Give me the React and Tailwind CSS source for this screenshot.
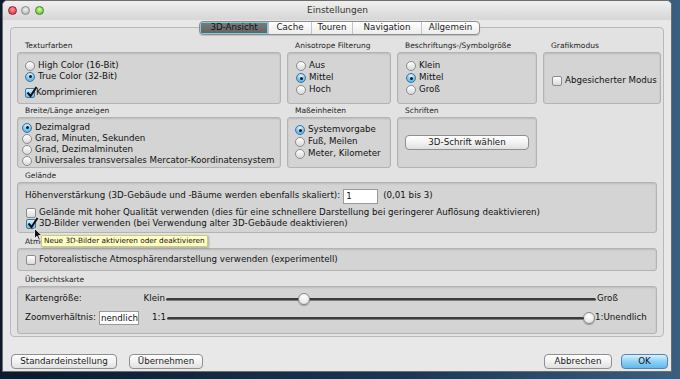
import React from "react";

const Radio = ({ on }) => (
  <span
    className={`w-[10px] h-[10px] rounded-full border flex items-center justify-center shrink-0 ${
      on
        ? "border-[#3b76a6] bg-[radial-gradient(circle_at_50%_25%,#e3f6ff,#63b9e9_70%)]"
        : "border-[#8c8c8c] bg-[linear-gradient(#ffffff,#d9d9d9)]"
    }`}
  >
    {on && <span className="w-[3px] h-[3px] rounded-full bg-[#151515]" />}
  </span>
);

const Check = ({ on }) => (
  <span
    className={`relative w-[10px] h-[10px] rounded-[2px] border shrink-0 ${
      on
        ? "border-[#3b76a6] bg-[linear-gradient(#d6f0ff,#6dbde9)]"
        : "border-[#8c8c8c] bg-[linear-gradient(#ffffff,#dadada)]"
    }`}
  >
    {on && (
      <svg className="absolute -top-[3px] left-0" width="12" height="12" viewBox="0 0 12 12">
        <path d="M1.5 6.5 L4.5 10 L10.5 1" stroke="#111" strokeWidth="2" fill="none" />
      </svg>
    )}
  </span>
);

const Opt = ({ children, h = "h-[11px]" }) => (
  <div className={`flex items-center gap-[3px] whitespace-nowrap ${h}`}>{children}</div>
);

const Group = ({ title, className, children }) => (
  <div className="flex flex-col">
    <div className="h-[12px] pl-[8px] text-[7.5px] leading-[12px] text-[#222] whitespace-nowrap">{title}</div>
    <div
      className={`rounded-[3px] border border-[#b3b3b3] bg-[#d4d4d4] shadow-[inset_0_1px_2px_rgba(0,0,0,0.12)] ${className}`}
    >
      {children}
    </div>
  </div>
);

const Btn = ({ children, w, ok }) => (
  <div
    className={`h-[15px] ${w} rounded-[4px] border flex items-center justify-center text-[8.7px] whitespace-nowrap ${
      ok
        ? "border-[#4f86b3] bg-[linear-gradient(#d9f1ff,#8fd0f5_50%,#5fb9ec)] text-[#111]"
        : "border-[#8f8f8f] bg-[linear-gradient(#ffffff,#f2f2f2_50%,#e0e0e0)] text-[#1a1a1a]"
    }`}
  >
    {children}
  </div>
);

const Track = ({ children }) => (
  <div className="relative flex-1 h-[3px] rounded-full bg-[linear-gradient(#3c3c3c,#3c3c3c_50%,#9a9a9a)]">
    {children}
  </div>
);

const Thumb = ({ className = "" }) => (
  <span
    className={`w-[12px] h-[12px] rounded-full border border-[#8a8a8a] bg-[radial-gradient(circle_at_50%_30%,#ffffff,#dcdcdc)] shadow-[0_1px_1px_rgba(0,0,0,0.3)] shrink-0 ${className}`}
  />
);

const tabs = [
  ["3D-Ansicht", "w-[68px]"],
  ["Cache", "w-[43px]"],
  ["Touren", "w-[41px]"],
  ["Navigation", "w-[69px]"],
  ["Allgemein", "w-[58px]"],
];

export default function App() {
  return (
    <div className="w-[680px] h-[379px] overflow-hidden bg-[linear-gradient(90deg,#0b1a2c,#1d3552_60%,#3a5f80)] pl-[2px] font-['DejaVu_Sans',sans-serif] text-[8.7px] text-[#111]">
      <div className="relative w-[670px] h-[372px] rounded-t-[5px] bg-[#e8e8e8] border border-[#6d6d6d] flex flex-col">
        {/* title bar */}
        <div className="h-[19px] rounded-t-[5px] bg-[linear-gradient(#efefef,#d6d6d6)] flex items-center relative">
          <div className="flex items-center gap-[4px] pl-[5px]">
            <span className="w-[9px] h-[9px] rounded-full bg-[radial-gradient(circle_at_50%_35%,#ff9a9a,#d8243a)] border border-[#9a1e2c]" />
            <span className="w-[9px] h-[9px] rounded-full bg-[radial-gradient(circle_at_50%_35%,#f2f2f2,#a9a9a9)] border border-[#8a8a8a]" />
            <span className="w-[9px] h-[9px] ml-[1px] rounded-full bg-[radial-gradient(circle_at_50%_35%,#d8ff9a,#4ab52a)] border border-[#3a8a22]" />
          </div>
          <div className="flex-1 text-center pr-[40px] text-[9px] text-[#333]">Einstellungen</div>
        </div>

        {/* tabs */}
        <div className="h-[14px] mt-[1px] flex justify-center pl-[5px] relative z-10">
          <div className="flex rounded-[4px] border border-[#8d8d8d] overflow-hidden bg-[linear-gradient(#ffffff,#ececec)] shadow-[0_1px_1px_rgba(0,0,0,0.15)]">
            {tabs.map(([t, w], i) => (
              <div
                key={t}
                className={`${w} flex items-center justify-center text-[8.7px] ${
                  i === 0
                    ? "bg-[linear-gradient(#7c7c7c,#626262)] text-[#111] shadow-[inset_0_0_0_1px_#6fd3e0]"
                    : "border-l border-[#c4c4c4] text-[#1a1a1a]"
                }`}
              >
                {t}
              </div>
            ))}
          </div>
        </div>

        {/* panel */}
        <div className="-mt-[8px] mx-[7px] h-[310px] rounded-[4px] border border-[#b9b9b9] bg-[#e2e2e2] pt-[12px] px-[6px] flex flex-col">
          <div className="grid grid-cols-[264px_104px_140px_118px] gap-x-[6px] gap-y-[1px]">
            <Group title="Texturfarben" className="h-[52px] pt-[7px] pl-[7px]">
              <Opt><Radio />High Color (16-Bit)</Opt>
              <Opt><Radio on />True Color (32-Bit)</Opt>
              <div className="flex items-center gap-[1px] h-[11px] mt-[5px]"><Check on />Komprimieren</div>
            </Group>
            <Group title="Anisotrope Filterung" className="h-[52px] pt-[7px] pl-[8px]">
              <Opt h="h-[12px]"><Radio />Aus</Opt>
              <Opt h="h-[12px]"><Radio on />Mittel</Opt>
              <Opt h="h-[12px]"><Radio />Hoch</Opt>
            </Group>
            <Group title="Beschriftungs-/Symbolgröße" className="h-[52px] pt-[7px] pl-[8px]">
              <Opt h="h-[12px]"><Radio />Klein</Opt>
              <Opt h="h-[12px]"><Radio on />Mittel</Opt>
              <Opt h="h-[12px]"><Radio />Groß</Opt>
            </Group>
            <Group title="Grafikmodus" className="h-[52px] pt-[6px] pl-[8px] flex items-center">
              <Opt><Check />Abgesicherter Modus</Opt>
            </Group>

            <Group title="Breite/Länge anzeigen" className="h-[51px] pt-[4px] pl-[4px]">
              <Opt><Radio on />Dezimalgrad</Opt>
              <Opt><Radio />Grad, Minuten, Sekunden</Opt>
              <Opt><Radio />Grad, Dezimalminuten</Opt>
              <Opt><Radio />Universales transversales Mercator-Koordinatensystem</Opt>
            </Group>
            <Group title="Maßeinheiten" className="h-[51px] pt-[6px] pl-[7px]">
              <Opt h="h-[12px]"><Radio on />Systemvorgabe</Opt>
              <Opt h="h-[12px]"><Radio />Fuß, Meilen</Opt>
              <Opt h="h-[12px]"><Radio />Meter, Kilometer</Opt>
            </Group>
            <Group title="Schriften" className="h-[51px] px-[7px] flex items-center">
              <Btn w="w-full">3D-Schrift wählen</Btn>
            </Group>
            <div />
          </div>

          <div className="mt-[2px]">
            <Group title="Gelände" className="h-[51px] pt-[5px] pl-[7px]">
              <div className="flex items-center h-[16px] whitespace-nowrap">
                <span>Höhenverstärkung (3D-Gebäude und -Bäume werden ebenfalls skaliert):</span>
                <span className="ml-[3px] w-[35px] h-[15px] bg-white border border-[#9a9a9a] pl-[2px] leading-[13px]">1</span>
                <span className="ml-[5px]">(0,01 bis 3)</span>
              </div>
              <div className="mt-[3px] pl-[1px]">
                <Opt><Check />Gelände mit hoher Qualität verwenden (dies für eine schnellere Darstellung bei geringerer Auflösung deaktivieren)</Opt>
                <Opt><Check on />3D-Bilder verwenden (bei Verwendung alter 3D-Gebäude deaktivieren)</Opt>
              </div>
            </Group>
          </div>

          <div className="mt-[3px]">
            <Group title="Atmosphäre" className="h-[23px] pl-[8px] flex items-center">
              <Opt><Check />Fotorealistische Atmosphärendarstellung verwenden (experimentell)</Opt>
            </Group>
          </div>

          <div className="mt-[3px]">
            <Group title="Übersichtskarte" className="h-[48px] pt-[5px] pl-[7px] pr-[8px]">
              <div className="flex items-center h-[14px] whitespace-nowrap">
                <div className="w-[141px] flex justify-between pr-[1px]">
                  <span>Kartengröße:</span>
                  <span>Klein</span>
                </div>
                <Track>
                  <Thumb className="absolute left-[132px] -top-[5px]" />
                </Track>
                <span className="w-[52px] pl-[1px]">Groß</span>
              </div>
              <div className="flex items-center h-[14px] mt-[5px] whitespace-nowrap">
                <div className="w-[142px] flex items-center">
                  <span>Zoomverhältnis:</span>
                  <span className="ml-[3px] w-[40px] h-[14px] bg-white border border-[#9a9a9a] pl-[1px] leading-[12px] overflow-hidden">nendlich</span>
                  <span className="ml-auto pr-[1px]">1:1</span>
                </div>
                <Track />
                <Thumb className="-ml-[1px]" />
                <span className="w-[53px]">1:Unendlich</span>
              </div>
            </Group>
          </div>
        </div>

        {/* bottom buttons */}
        <div className="mt-[17px] flex items-center px-[8px] pr-[3px]">
          <Btn w="w-[106px]">Standardeinstellung</Btn>
          <div className="ml-[12px]"><Btn w="w-[74px]">Übernehmen</Btn></div>
          <div className="ml-auto"><Btn w="w-[68px]">Abbrechen</Btn></div>
          <div className="ml-[9px]"><Btn w="w-[47px]" ok>OK</Btn></div>
        </div>

        {/* tooltip + cursor */}
        <div className="absolute left-[38px] top-[234px] h-[12px] px-[2px] bg-[#ffffc4] border border-[#c9c98a] text-[7.3px] leading-[10px] whitespace-nowrap shadow-[1px_1px_2px_rgba(0,0,0,0.25)]">
          Neue 3D-Bilder aktivieren oder deaktivieren
        </div>
        <svg className="absolute left-[31px] top-[227px]" width="9" height="13" viewBox="0 0 9 13">
          <path d="M0.5 0.5 L0.5 10.5 L3 8.2 L4.8 12.2 L6.3 11.5 L4.6 7.6 L8 7.6 Z" fill="#111" stroke="#fff" strokeWidth="0.8" />
        </svg>
      </div>
    </div>
  );
}
